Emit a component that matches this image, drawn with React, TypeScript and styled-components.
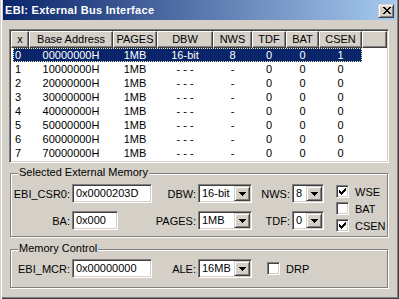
import styled, { createGlobalStyle } from 'styled-components';

const FACE = '#d4d0c8';
const SHADOW = '#808080';
const DARK = '#404040';
const NAVY = '#0a246a';

const GlobalStyle = createGlobalStyle`
  html, body {
    margin: 0;
    padding: 0;
    background: ${FACE};
  }
  body {
    font-family: "Liberation Sans", Arial, sans-serif;
    font-size: 11px;
    color: #000;
  }
  * {
    box-sizing: border-box;
  }
`;

type Align = 'left' | 'center';

const columns: { title: string; width: number; align: Align }[] = [
  { title: 'x', width: 18, align: 'left' },
  { title: 'Base Address', width: 84, align: 'center' },
  { title: 'PAGES', width: 44, align: 'center' },
  { title: 'DBW', width: 56, align: 'center' },
  { title: 'NWS', width: 39, align: 'center' },
  { title: 'TDF', width: 34, align: 'center' },
  { title: 'BAT', width: 33, align: 'center' },
  { title: 'CSEN', width: 43, align: 'center' },
];

const rows = [
  ['0', '00000000H', '1MB', '16-bit', '8', '0', '0', '1'],
  ['1', '10000000H', '1MB', '- - -', '-', '0', '0', '0'],
  ['2', '20000000H', '1MB', '- - -', '-', '0', '0', '0'],
  ['3', '30000000H', '1MB', '- - -', '-', '0', '0', '0'],
  ['4', '40000000H', '1MB', '- - -', '-', '0', '0', '0'],
  ['5', '50000000H', '1MB', '- - -', '-', '0', '0', '0'],
  ['6', '60000000H', '1MB', '- - -', '-', '0', '0', '0'],
  ['7', '70000000H', '1MB', '- - -', '-', '0', '0', '0'],
];

const headerTemplate = columns.map((c) => `${c.width}px`).join(' ') + ' 1fr';
// rows start 2px further right, so the first column is 2px narrower
const rowTemplate = columns.map((c, i) => `${i === 0 ? c.width - 2 : c.width}px`).join(' ');

const CloseGlyph = () => (
  <svg width="8" height="7" viewBox="0 0 8 7" shapeRendering="crispEdges">
    <path
      fill="#000"
      d="M0 0h2v1H0z M6 0h2v1H6z M1 1h2v1H1z M5 1h2v1H5z M2 2h4v1H2z M3 3h2v1H3z M2 4h4v1H2z M1 5h2v1H1z M5 5h2v1H5z M0 6h2v1H0z M6 6h2v1H6z"
    />
  </svg>
);

const ArrowGlyph = () => (
  <svg width="7" height="4" viewBox="0 0 7 4" shapeRendering="crispEdges">
    <path fill="#000" d="M0 0h7v1H0z M1 1h5v1H1z M2 2h3v1H2z M3 3h1v1H3z" />
  </svg>
);

const CheckGlyph = () => (
  <svg width="7" height="7" viewBox="0 0 7 7" shapeRendering="crispEdges">
    <path
      fill="#000"
      d="M6 0h1v1H6z M5 1h2v1H5z M0 2h1v1H0z M4 2h3v1H4z M0 3h2v1H0z M3 3h3v1H3z M0 4h5v1H0z M1 5h3v1H1z M2 6h1v1H2z"
    />
  </svg>
);

const Combo = ({ value, width }: { value: string; width: number }) => (
  <ComboBox $width={width}>
    <ComboValue>{value}</ComboValue>
    <DropButton>
      <ArrowGlyph />
    </DropButton>
  </ComboBox>
);

const Check = ({ label, checked }: { label: string; checked?: boolean }) => (
  <CheckItem>
    <CheckBox>{checked && <CheckGlyph />}</CheckBox>
    {label}
  </CheckItem>
);

const App = () => {
  return (
    <>
      <GlobalStyle />
      <Window>
        <TitleBar>
          <TitleText>EBI: External Bus Interface</TitleText>
          <CloseButton>
            <CloseGlyph />
          </CloseButton>
        </TitleBar>

        <ListView>
          <HeaderRow>
            {columns.map((c) => (
              <HeaderCell key={c.title}>{c.title}</HeaderCell>
            ))}
            <HeaderCell />
          </HeaderRow>
          {rows.map((r, i) => (
            <Row key={r[0]} $selected={i === 0}>
              {r.map((v, j) => (
                <Cell key={j} $align={columns[j].align}>
                  {v}
                </Cell>
              ))}
            </Row>
          ))}
        </ListView>

        <GroupBox $top={10} $height={64}>
          <GroupCaption>Selected External Memory</GroupCaption>
          <FieldGrid $padTop={10}>
            <FieldLabel>EBI_CSR0:</FieldLabel>
            <TextBox $width={80}>0x0000203D</TextBox>
            <FieldLabel>DBW:</FieldLabel>
            <Combo value="16-bit" width={54} />
            <FieldLabel>NWS:</FieldLabel>
            <Combo value="8" width={32} />
            <CheckList>
              <Check label="WSE" checked />
              <Check label="BAT" />
              <Check label="CSEN" checked />
            </CheckList>

            <FieldLabel>BA:</FieldLabel>
            <TextBox $width={46}>0x000</TextBox>
            <FieldLabel>PAGES:</FieldLabel>
            <Combo value="1MB" width={54} />
            <FieldLabel>TDF:</FieldLabel>
            <Combo value="0" width={32} />
          </FieldGrid>
        </GroupBox>

        <GroupBox $top={12} $height={39}>
          <GroupCaption>Memory Control</GroupCaption>
          <FieldGrid $padTop={9}>
            <FieldLabel>EBI_MCR:</FieldLabel>
            <TextBox $width={80}>0x00000000</TextBox>
            <FieldLabel>ALE:</FieldLabel>
            <Combo value="16MB" width={54} />
            <InlineCheck>
              <Check label="DRP" />
            </InlineCheck>
          </FieldGrid>
        </GroupBox>
      </Window>
    </>
  );
};

const Window = styled.div`
  width: 399px;
  height: 299px;
  padding: 0 3px 3px 3px;
  background: ${FACE};
  box-shadow: inset 1px 0 ${FACE}, inset 2px 0 #fff, inset -1px -1px ${DARK}, inset -2px -2px ${SHADOW};
`;

const TitleBar = styled.div`
  height: 20px;
  display: flex;
  align-items: center;
  justify-content: space-between;
  padding: 0 2px;
  background: linear-gradient(to right, ${NAVY}, #a6caf0);
`;

const TitleText = styled.span`
  color: #fff;
  font-weight: bold;
  font-size: 11px;
  letter-spacing: 0.3px;
`;

const CloseButton = styled.div`
  width: 16px;
  height: 14px;
  margin-top: 1px;
  display: flex;
  align-items: center;
  justify-content: center;
  padding-left: 1px;
  background: ${FACE};
  border: 1px solid;
  border-color: ${FACE} ${DARK} ${DARK} ${FACE};
  box-shadow: inset 1px 1px #fff, inset -1px -1px ${SHADOW};
`;

const ListView = styled.div`
  margin: 9px 0 0 6px;
  width: 380px;
  height: 134px;
  padding: 1px;
  background: #fff;
  border: 1px solid;
  border-color: ${SHADOW} #fff #fff ${SHADOW};
  box-shadow: inset 1px 1px ${DARK}, inset -1px -1px ${FACE};
`;

const HeaderRow = styled.div`
  display: grid;
  grid-template-columns: ${headerTemplate};
  height: 17px;
`;

const HeaderCell = styled.div`
  background: ${FACE};
  border: 1px solid;
  border-color: #fff ${DARK} ${DARK} #fff;
  box-shadow: inset -1px -1px ${SHADOW};
  text-align: center;
  line-height: 15px;
  white-space: nowrap;
  overflow: hidden;
`;

const Row = styled.div<{ $selected?: boolean }>`
  display: grid;
  grid-template-columns: ${rowTemplate};
  height: 14px;
  line-height: 14px;
  margin-left: 2px;
  width: max-content;
  background: ${(p) => (p.$selected ? NAVY : 'transparent')};
  color: ${(p) => (p.$selected ? '#fff' : '#000')};
  outline: ${(p) => (p.$selected ? '1px dotted #f4f0b0' : 'none')};
  outline-offset: -1px;
`;

const Cell = styled.div<{ $align: Align }>`
  text-align: ${(p) => p.$align};
  padding-left: ${(p) => (p.$align === 'left' ? '2px' : '0')};
  white-space: nowrap;
`;

const GroupBox = styled.div<{ $top: number; $height: number }>`
  position: relative;
  margin: ${(p) => p.$top}px 0 0 7px;
  width: 378px;
  height: ${(p) => p.$height}px;
  border: 1px solid ${SHADOW};
  box-shadow: inset 1px 1px #fff, 1px 1px #fff;
`;

const GroupCaption = styled.span`
  position: absolute;
  top: -8px;
  left: 7px;
  padding: 0 1px;
  line-height: 13px;
  background: ${FACE};
`;

const FieldGrid = styled.div<{ $padTop: number }>`
  display: grid;
  grid-template-columns: 61px 80px 46px 54px 40px 32px auto;
  grid-template-rows: 19px 19px;
  row-gap: 8px;
  align-items: center;
  padding-top: ${(p) => p.$padTop}px;
`;

const FieldLabel = styled.span`
  text-align: right;
  padding-right: 2px;
  white-space: nowrap;
`;

const Sunken = styled.div`
  height: 19px;
  background: #fff;
  border: 1px solid;
  border-color: ${SHADOW} #fff #fff ${SHADOW};
  box-shadow: inset 1px 1px ${DARK}, inset -1px -1px ${FACE};
`;

const TextBox = styled(Sunken)<{ $width: number }>`
  width: ${(p) => p.$width}px;
  padding-left: 3px;
  line-height: 17px;
  white-space: nowrap;
`;

const ComboBox = styled(Sunken)<{ $width: number }>`
  width: ${(p) => p.$width}px;
  display: flex;
  padding: 1px;
`;

const ComboValue = styled.span`
  flex: 1;
  padding-left: 2px;
  line-height: 15px;
  white-space: nowrap;
  overflow: hidden;
`;

const DropButton = styled.div`
  width: 16px;
  height: 15px;
  flex-shrink: 0;
  display: flex;
  align-items: center;
  justify-content: center;
  padding-left: 1px;
  background: ${FACE};
  border: 1px solid;
  border-color: ${FACE} ${DARK} ${DARK} ${FACE};
  box-shadow: inset 1px 1px #fff, inset -1px -1px ${SHADOW};
`;

const CheckList = styled.div`
  grid-column: 7;
  grid-row: 1 / span 2;
  align-self: start;
  margin: -1px 0 0 12px;
  display: flex;
  flex-direction: column;
`;

const InlineCheck = styled.div`
  grid-column: 5 / span 3;
  margin-left: 15px;
`;

const CheckItem = styled.div`
  height: 17px;
  display: flex;
  align-items: center;
  gap: 6px;
  white-space: nowrap;
`;

const CheckBox = styled.div`
  width: 13px;
  height: 13px;
  flex-shrink: 0;
  display: flex;
  align-items: center;
  justify-content: center;
  background: #fff;
  border: 1px solid;
  border-color: ${SHADOW} #fff #fff ${SHADOW};
  box-shadow: inset 1px 1px ${DARK}, inset -1px -1px ${FACE};
`;

export default App;
